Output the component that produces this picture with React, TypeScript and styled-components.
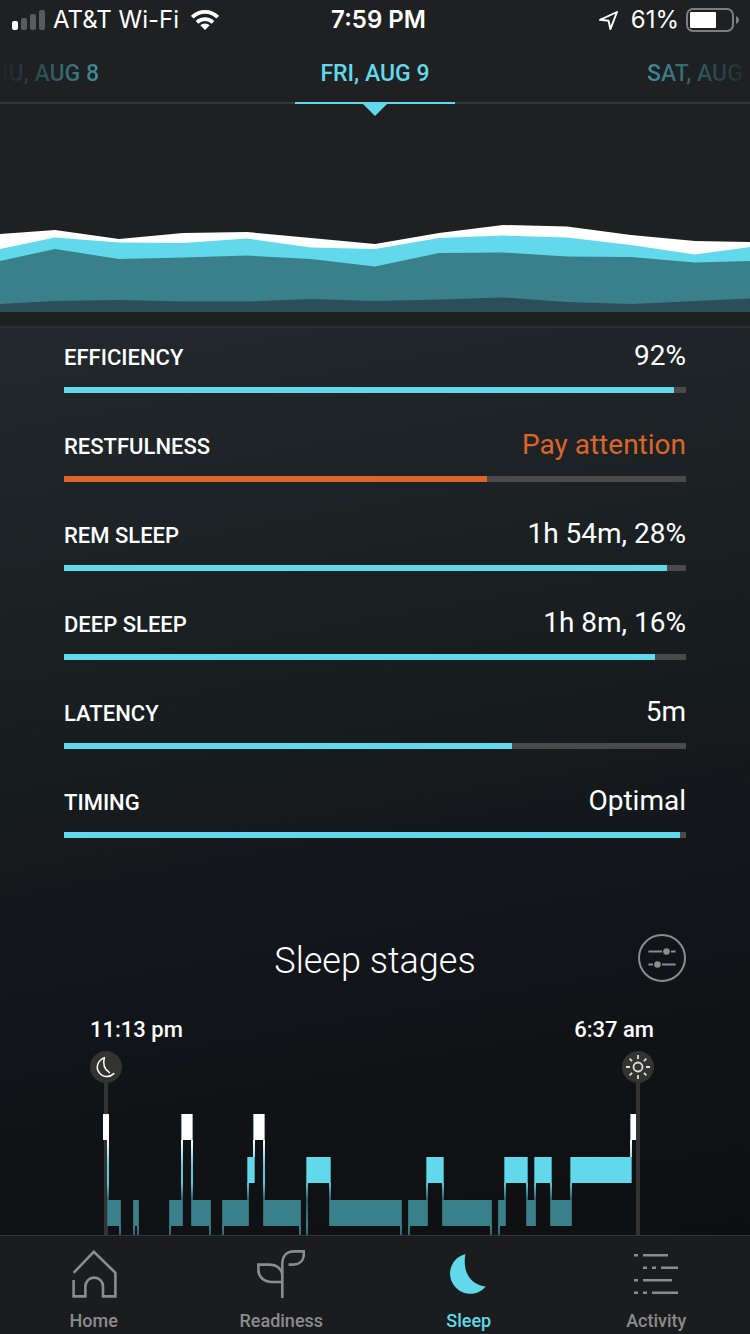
import React from "react";
import styled, { createGlobalStyle } from "styled-components";

const color = {
  aqua: "#62d9ea",
  teal: "#3a808b",
  deep: "#2a4f59",
  orange: "#dc652c",
  grey: "#8a8c8e",
};

const GlobalStyle = createGlobalStyle`
  * { box-sizing: border-box; }
  body {
    margin: 0;
    background: #1e2021;
    color: #fff;
    font-family: Roboto, "Noto Sans", sans-serif;
  }
  button { font: inherit; color: inherit; background: none; border: 0; padding: 0; cursor: pointer; }
  svg { display: block; }
`;

const Screen = styled.div`
  display: flex;
  flex-direction: column;
  height: 100vh;
  overflow: hidden;
`;

/* ---------- Status bar ---------- */

const StatusBar = styled.header`
  display: grid;
  grid-template-columns: 1fr auto 1fr;
  align-items: center;
  height: 40px;
  padding: 0 11px 0 12px;
  font-family: Inter, "Liberation Sans", sans-serif;
  font-size: 24px;
  line-height: 40px;
`;

const StatusGroup = styled.div<{ $end?: boolean }>`
  display: flex;
  align-items: center;
  justify-content: ${(p) => (p.$end ? "flex-end" : "flex-start")};
  gap: 7px;
  white-space: nowrap;
`;

const Clock = styled.div`
  padding-left: 6px;
  font-weight: 600;
`;

const StatusText = styled.span`
  font-weight: 400;
`;

const Wifi = styled.svg`
  margin-left: 5px;
`;

const Location = styled.svg`
  margin-right: 6px;
`;

/* ---------- Day picker ---------- */

const DayPicker = styled.nav`
  display: grid;
  grid-template-columns: 1fr 160px 1fr;
  height: 64px;
  overflow-x: clip;
`;

const Day = styled.button<{ $place: "before" | "current" | "after" }>`
  position: relative;
  display: flex;
  align-items: center;
  min-width: 0;
  height: 64px;
  border-bottom: 2px solid ${(p) => (p.$place === "current" ? color.aqua : "#323639")};
  padding: ${(p) => ({ before: "6px 196px 0 0", current: "6px 0 0", after: "6px 0 0 192px" })[p.$place]};
  justify-content: ${(p) => ({ before: "flex-end", current: "center", after: "flex-start" })[p.$place]};
  color: ${color.aqua};
  font-size: 23px;
  font-weight: 500;
  line-height: 32px;
  white-space: nowrap;

  ${(p) =>
    p.$place === "current" &&
    `&::after {
      content: "";
      position: absolute;
      top: 64px;
      left: 50%;
      margin-left: -12px;
      border: 12px solid transparent;
      border-top-color: ${color.aqua};
      border-bottom: 0;
    }`}
`;

const DayText = styled.span<{ $fade?: "left" | "right" }>`
  ${(p) =>
    p.$fade &&
    `color: transparent;
     background: linear-gradient(to ${p.$fade}, #41909c, #1e2021 ${p.$fade === "left" ? "98px" : "108px"});
     background-clip: text;
     -webkit-background-clip: text;`}
`;

/* ---------- Trend ---------- */

const Trend = styled.section`
  padding-bottom: 14px;
  border-bottom: 2px solid #2f3132;
  background: linear-gradient(#1e2021 80%, #1b2224);
`;

const trendX = [0, 55, 119, 183, 247, 311, 375, 439, 503, 567, 631, 695, 750];
const trendLayers = [
  { fill: "#ffffff", y: [130, 126, 135, 129, 128, 134, 140, 129, 121, 122.5, 131, 137, 138] },
  { fill: color.aqua, y: [145, 133.5, 138.5, 139, 134.5, 143.5, 145, 134, 131.5, 133.5, 141, 150.5, 143] },
  { fill: color.teal, y: [157, 145, 155, 153.5, 151.5, 155, 162.5, 149, 148.5, 152.5, 153, 158.5, 157] },
  { fill: color.deep, y: [200, 197, 196, 197.5, 197.5, 195, 197, 195.5, 193.5, 198, 200, 197, 194.5] },
];

function TrendChart() {
  return (
    <svg width="100%" height="208" viewBox="0 0 750 208" preserveAspectRatio="none" role="img" aria-label="Sleep trend">
      {trendLayers.map((layer) => (
        <polygon
          key={layer.fill}
          fill={layer.fill}
          points={`${trendX.map((x, i) => `${x},${layer.y[i]}`).join(" ")} 750,208 0,208`}
        />
      ))}
    </svg>
  );
}

/* ---------- Contributors ---------- */

const Content = styled.main`
  flex: 1;
  min-height: 0;
  overflow-y: auto;
  scrollbar-width: none;
  padding: 10px 64px 0;
  background: linear-gradient(170deg, #22282b 0%, #181d20 40%, #111418 70%, #0e0f11 100%);
`;

const Metrics = styled.div`
  display: flex;
  flex-direction: column;
  gap: 34px;
`;

const MetricHead = styled.div`
  display: flex;
  justify-content: space-between;
  align-items: baseline;
  height: 36px;
  margin-bottom: 13px;
`;

const MetricName = styled.span`
  font-size: 22px;
  font-weight: 500;
  line-height: 28px;
`;

const MetricValue = styled.span<{ $alert?: boolean }>`
  font-size: 28px;
  line-height: 36px;
  color: ${(p) => (p.$alert ? color.orange : "#fff")};
`;

const Track = styled.div`
  height: 6px;
  background: #4a4a4b;
`;

const Fill = styled.div<{ $alert?: boolean }>`
  height: 6px;
  background: ${(p) => (p.$alert ? color.orange : color.aqua)};
`;

const metrics = [
  { name: "EFFICIENCY", value: "92%", score: 98 },
  { name: "RESTFULNESS", value: "Pay attention", score: 68, alert: true },
  { name: "REM SLEEP", value: "1h 54m, 28%", score: 97 },
  { name: "DEEP SLEEP", value: "1h 8m, 16%", score: 95 },
  { name: "LATENCY", value: "5m", score: 72 },
  { name: "TIMING", value: "Optimal", score: 99 },
];

/* ---------- Sleep stages ---------- */

const StagesHead = styled.div`
  display: grid;
  grid-template-columns: 48px 1fr 48px;
  align-items: center;
  margin: 96px 0 32px;
`;

const Title = styled.h2`
  grid-column: 2;
  margin: 0;
  padding-top: 6px;
  text-align: center;
  font-size: 36px;
  font-weight: 300;
  line-height: 42px;
`;

const RoundButton = styled.button`
  width: 48px;
  height: 48px;
`;

const Stages = styled.div`
  padding: 0 32px 0 26px;
`;

const Times = styled.div`
  display: flex;
  justify-content: space-between;
`;

const TimeMark = styled.div<{ $end?: boolean }>`
  display: flex;
  flex-direction: column;
  align-items: ${(p) => (p.$end ? "flex-end" : "flex-start")};
  gap: 5px;
  font-size: 22px;
  font-weight: 500;
  line-height: 32px;
`;

const Badge = styled.span`
  width: 32px;
  height: 32px;
  border-radius: 50%;
  background: #333332;
`;

type Stage = "awake" | "rem" | "light" | "deep";
const stageTop: Record<Stage, number> = { awake: 31, rem: 74, light: 117, deep: 160 };
const stageFill: Record<Stage, string> = {
  awake: "#ffffff",
  rem: color.aqua,
  light: color.teal,
  deep: color.deep,
};
const BLOCK = 26;

const night: [Stage, number, number][] = [
  ["awake", 13, 19],
  ["light", 17, 31],
  ["deep", 29, 45],
  ["light", 43, 49],
  ["deep", 47, 81],
  ["light", 79, 93],
  ["awake", 91, 103],
  ["light", 101, 121],
  ["deep", 119, 134],
  ["light", 132, 159],
  ["rem", 157, 165],
  ["awake", 163, 175],
  ["light", 173, 211],
  ["deep", 209, 218],
  ["rem", 216, 241],
  ["light", 239, 312],
  ["deep", 310, 320],
  ["light", 318, 338],
  ["rem", 336, 354],
  ["light", 352, 402],
  ["deep", 400, 410],
  ["light", 408, 416],
  ["rem", 414, 438],
  ["light", 436, 446],
  ["rem", 444, 462],
  ["light", 460, 482],
  ["rem", 480, 542],
  ["awake", 540, 546],
];

function Hypnogram() {
  return (
    <svg width="100%" height="190" viewBox="0 0 564 190" preserveAspectRatio="none" role="img" aria-label="Sleep stages">
      <defs>
        <linearGradient id="link" gradientUnits="userSpaceOnUse" x1="0" y1="57" x2="0" y2="160">
          <stop offset="0" stopColor="#ffffff" />
          <stop offset="0.25" stopColor="#62c9d8" />
          <stop offset="0.42" stopColor="#5ac8d8" />
          <stop offset="0.58" stopColor="#2c5d66" />
          <stop offset="0.83" stopColor="#3a808b" />
          <stop offset="1" stopColor={color.deep} />
        </linearGradient>
      </defs>
      <rect x="14" y="0" width="4" height="190" fill="#333332" />
      <rect x="546" y="0" width="4" height="190" fill="#333332" />
      {night.map(([stage, from, to], i) => (
        <g key={i}>
          <rect x={from} y={stageTop[stage]} width={to - from} height={BLOCK} fill={stageFill[stage]} />
          {i > 0 && (
            <rect x={from} y={stageTop[stage]} width="1" height={BLOCK} fill="#2c5d66" fillOpacity="0.5" />
          )}
          {i < night.length - 1 && i > 0 && (
            <rect x={to - 1} y={stageTop[stage]} width="1" height={BLOCK} fill="#2c5d66" fillOpacity="0.5" />
          )}
        </g>
      ))}
      {night.slice(1).map(([stage, from], i) => {
        const before = stageTop[night[i][0]];
        const here = stageTop[stage];
        const top = Math.min(before, here) + BLOCK;
        return <rect key={i} x={from} y={top} width="2" height={Math.max(before, here) - top} fill="url(#link)" />;
      })}
    </svg>
  );
}

/* ---------- Tab bar ---------- */

const TabBar = styled.nav`
  display: grid;
  grid-template-columns: repeat(4, 1fr);
  height: 99px;
  border-top: 1px solid #363738;
  background: #1b1c1d;
`;

const Tab = styled.button<{ $active?: boolean }>`
  display: flex;
  flex-direction: column;
  align-items: center;
  gap: 10px;
  padding-top: 14px;
  color: ${(p) => (p.$active ? color.aqua : color.grey)};
  font-size: 18px;
  font-weight: 500;
  line-height: 26px;
`;

function TabIcon({ children }: { children: React.ReactNode }) {
  return (
    <svg width="48" height="48" viewBox="0 0 48 48" fill="none" stroke="currentColor" strokeWidth="2.6" aria-hidden="true">
      {children}
    </svg>
  );
}

const tabs = [
  {
    label: "Home",
    icon: <path d="M3.6 22.8 23.8 1.8 45.4 22.8V46.4H33V36.4A8.8 8.8 0 0 0 15.4 36.4V46.4H3.6V30" />,
  },
  {
    label: "Readiness",
    icon: (
      <path d="M25.3 48V14C25.3 6 30 1.4 37 1.4H47V3C47 10 43 14.6 36 14.6H31.6M25.3 32H15C6 32 1.4 26 1.4 20V14.6H12C20 14.6 25.3 19 25.3 26" />
    ),
  },
  {
    label: "Sleep",
    active: true,
    icon: <path d="M20.4 4A20.2 20.2 0 1 0 40.8 36.5C28 35 16.8 25 20.4 4Z" fill="currentColor" stroke="none" />,
  },
  {
    label: "Activity",
    icon: <path d="M2 5.3h4m5 0h25M11 17.7h4m5 0h4m5 0h17M2 30.3h4m5 0h29M2 42.7h4m5 0h4m5 0h26" />,
  },
];

export default function App() {
  return (
    <>
      <GlobalStyle />
      <Screen>
        <StatusBar>
          <StatusGroup>
            <svg width="34" height="20" viewBox="0 0 34 20" aria-hidden="true">
              <rect x="0" y="11" width="6" height="9" rx="2" fill="#fff" />
              <rect x="9" y="8" width="6" height="12" rx="2" fill="#5a5b5c" />
              <rect x="18" y="4" width="6" height="16" rx="2" fill="#5a5b5c" />
              <rect x="27" y="0" width="6" height="20" rx="2" fill="#5a5b5c" />
            </svg>
            <StatusText>AT&amp;T Wi-Fi</StatusText>
            <Wifi width="28" height="20" viewBox="0 0 28 20" fill="none" stroke="#fff" strokeWidth="3.8" aria-hidden="true">
              <path d="M1.3 7.2A18 18 0 0 1 26.7 7.2" />
              <path d="M6 12.4A11.5 11.5 0 0 1 22 12.4" />
              <path d="M14 20 9.3 15.3A6.8 6.8 0 0 1 18.7 15.3Z" fill="#fff" stroke="none" />
            </Wifi>
          </StatusGroup>
          <Clock>7:59 PM</Clock>
          <StatusGroup $end>
            <Location width="19" height="19" viewBox="0 0 19 19" fill="none" stroke="#fff" strokeWidth="1.9" strokeLinejoin="round" aria-hidden="true">
              <path d="M18 1 1 8.800 9.600 9.700 11.400 18.200Z" />
            </Location>
            <StatusText>61%</StatusText>
            <svg width="53" height="24" viewBox="0 0 53 24" aria-hidden="true">
              <rect x="1" y="1" width="46" height="22" rx="6" fill="none" stroke="#7d7e7f" strokeWidth="2" />
              <rect x="4" y="4" width="26" height="16" rx="1" fill="#fff" />
              <path d="M50 8C54 9.500 54 14.500 50 16Z" fill="#7d7e7f" />
            </svg>
          </StatusGroup>
        </StatusBar>

        <DayPicker aria-label="Day">
          <Day $place="before">
            <DayText $fade="left">THU, AUG 8</DayText>
          </Day>
          <Day $place="current" aria-current="date">
            <DayText>FRI, AUG 9</DayText>
          </Day>
          <Day $place="after">
            <DayText $fade="right">SAT, AUG 10</DayText>
          </Day>
        </DayPicker>

        <Trend>
          <TrendChart />
        </Trend>

        <Content>
          <Metrics>
            {metrics.map((m) => (
              <div key={m.name}>
                <MetricHead>
                  <MetricName>{m.name}</MetricName>
                  <MetricValue $alert={m.alert}>{m.value}</MetricValue>
                </MetricHead>
                <Track role="meter" aria-label={m.name} aria-valuemin={0} aria-valuemax={100} aria-valuenow={m.score}>
                  <Fill $alert={m.alert} style={{ width: `${m.score}%` }} />
                </Track>
              </div>
            ))}
          </Metrics>

          <StagesHead>
            <Title>Sleep stages</Title>
            <RoundButton aria-label="Adjust sleep stages">
              <svg width="48" height="48" viewBox="0 0 48 48" fill="none" stroke={color.grey} strokeWidth="2">
                <circle cx="24" cy="24" r="23" />
                <path d="M10.400 17.600H24M33 17.600H37.600M10.400 30.500H15M24 30.500H37.600" />
                <circle cx="28.500" cy="17.600" r="3.300" fill={color.grey} stroke="none" />
                <circle cx="19.500" cy="30.500" r="3.300" fill={color.grey} stroke="none" />
              </svg>
            </RoundButton>
          </StagesHead>

          <Stages>
            <Times>
              <TimeMark>
                11:13 pm
                <Badge>
                  <svg width="32" height="32" viewBox="0 0 32 32" fill="none" stroke="#fff" strokeWidth="1.500" strokeLinecap="round" strokeLinejoin="round">
                    <path d="M19.500 21.600C14.800 18.600 12.600 13 14.400 6.600C7.500 9.600 5.500 16.500 9 21.300C12.600 26.600 19.600 26.600 23.800 22.600" />
                  </svg>
                </Badge>
              </TimeMark>
              <TimeMark $end>
                6:37 am
                <Badge>
                  <svg width="32" height="32" viewBox="0 0 32 32" fill="none" stroke="#dededd" strokeWidth="1.800">
                    <circle cx="16" cy="16" r="4.500" />
                    <path d="M16 4v4M16 24v4M4 16h4M24 16h4M7.600 7.600l2.500 2.500M21.900 21.900l2.500 2.500M24.400 7.600l-2.500 2.500M10.100 21.900l-2.500 2.500" />
                  </svg>
                </Badge>
              </TimeMark>
            </Times>
            <Hypnogram />
          </Stages>
        </Content>

        <TabBar aria-label="Sections">
          {tabs.map((t) => (
            <Tab key={t.label} $active={t.active} aria-current={t.active ? "page" : undefined}>
              <TabIcon>{t.icon}</TabIcon>
              {t.label}
            </Tab>
          ))}
        </TabBar>
      </Screen>
    </>
  );
}
